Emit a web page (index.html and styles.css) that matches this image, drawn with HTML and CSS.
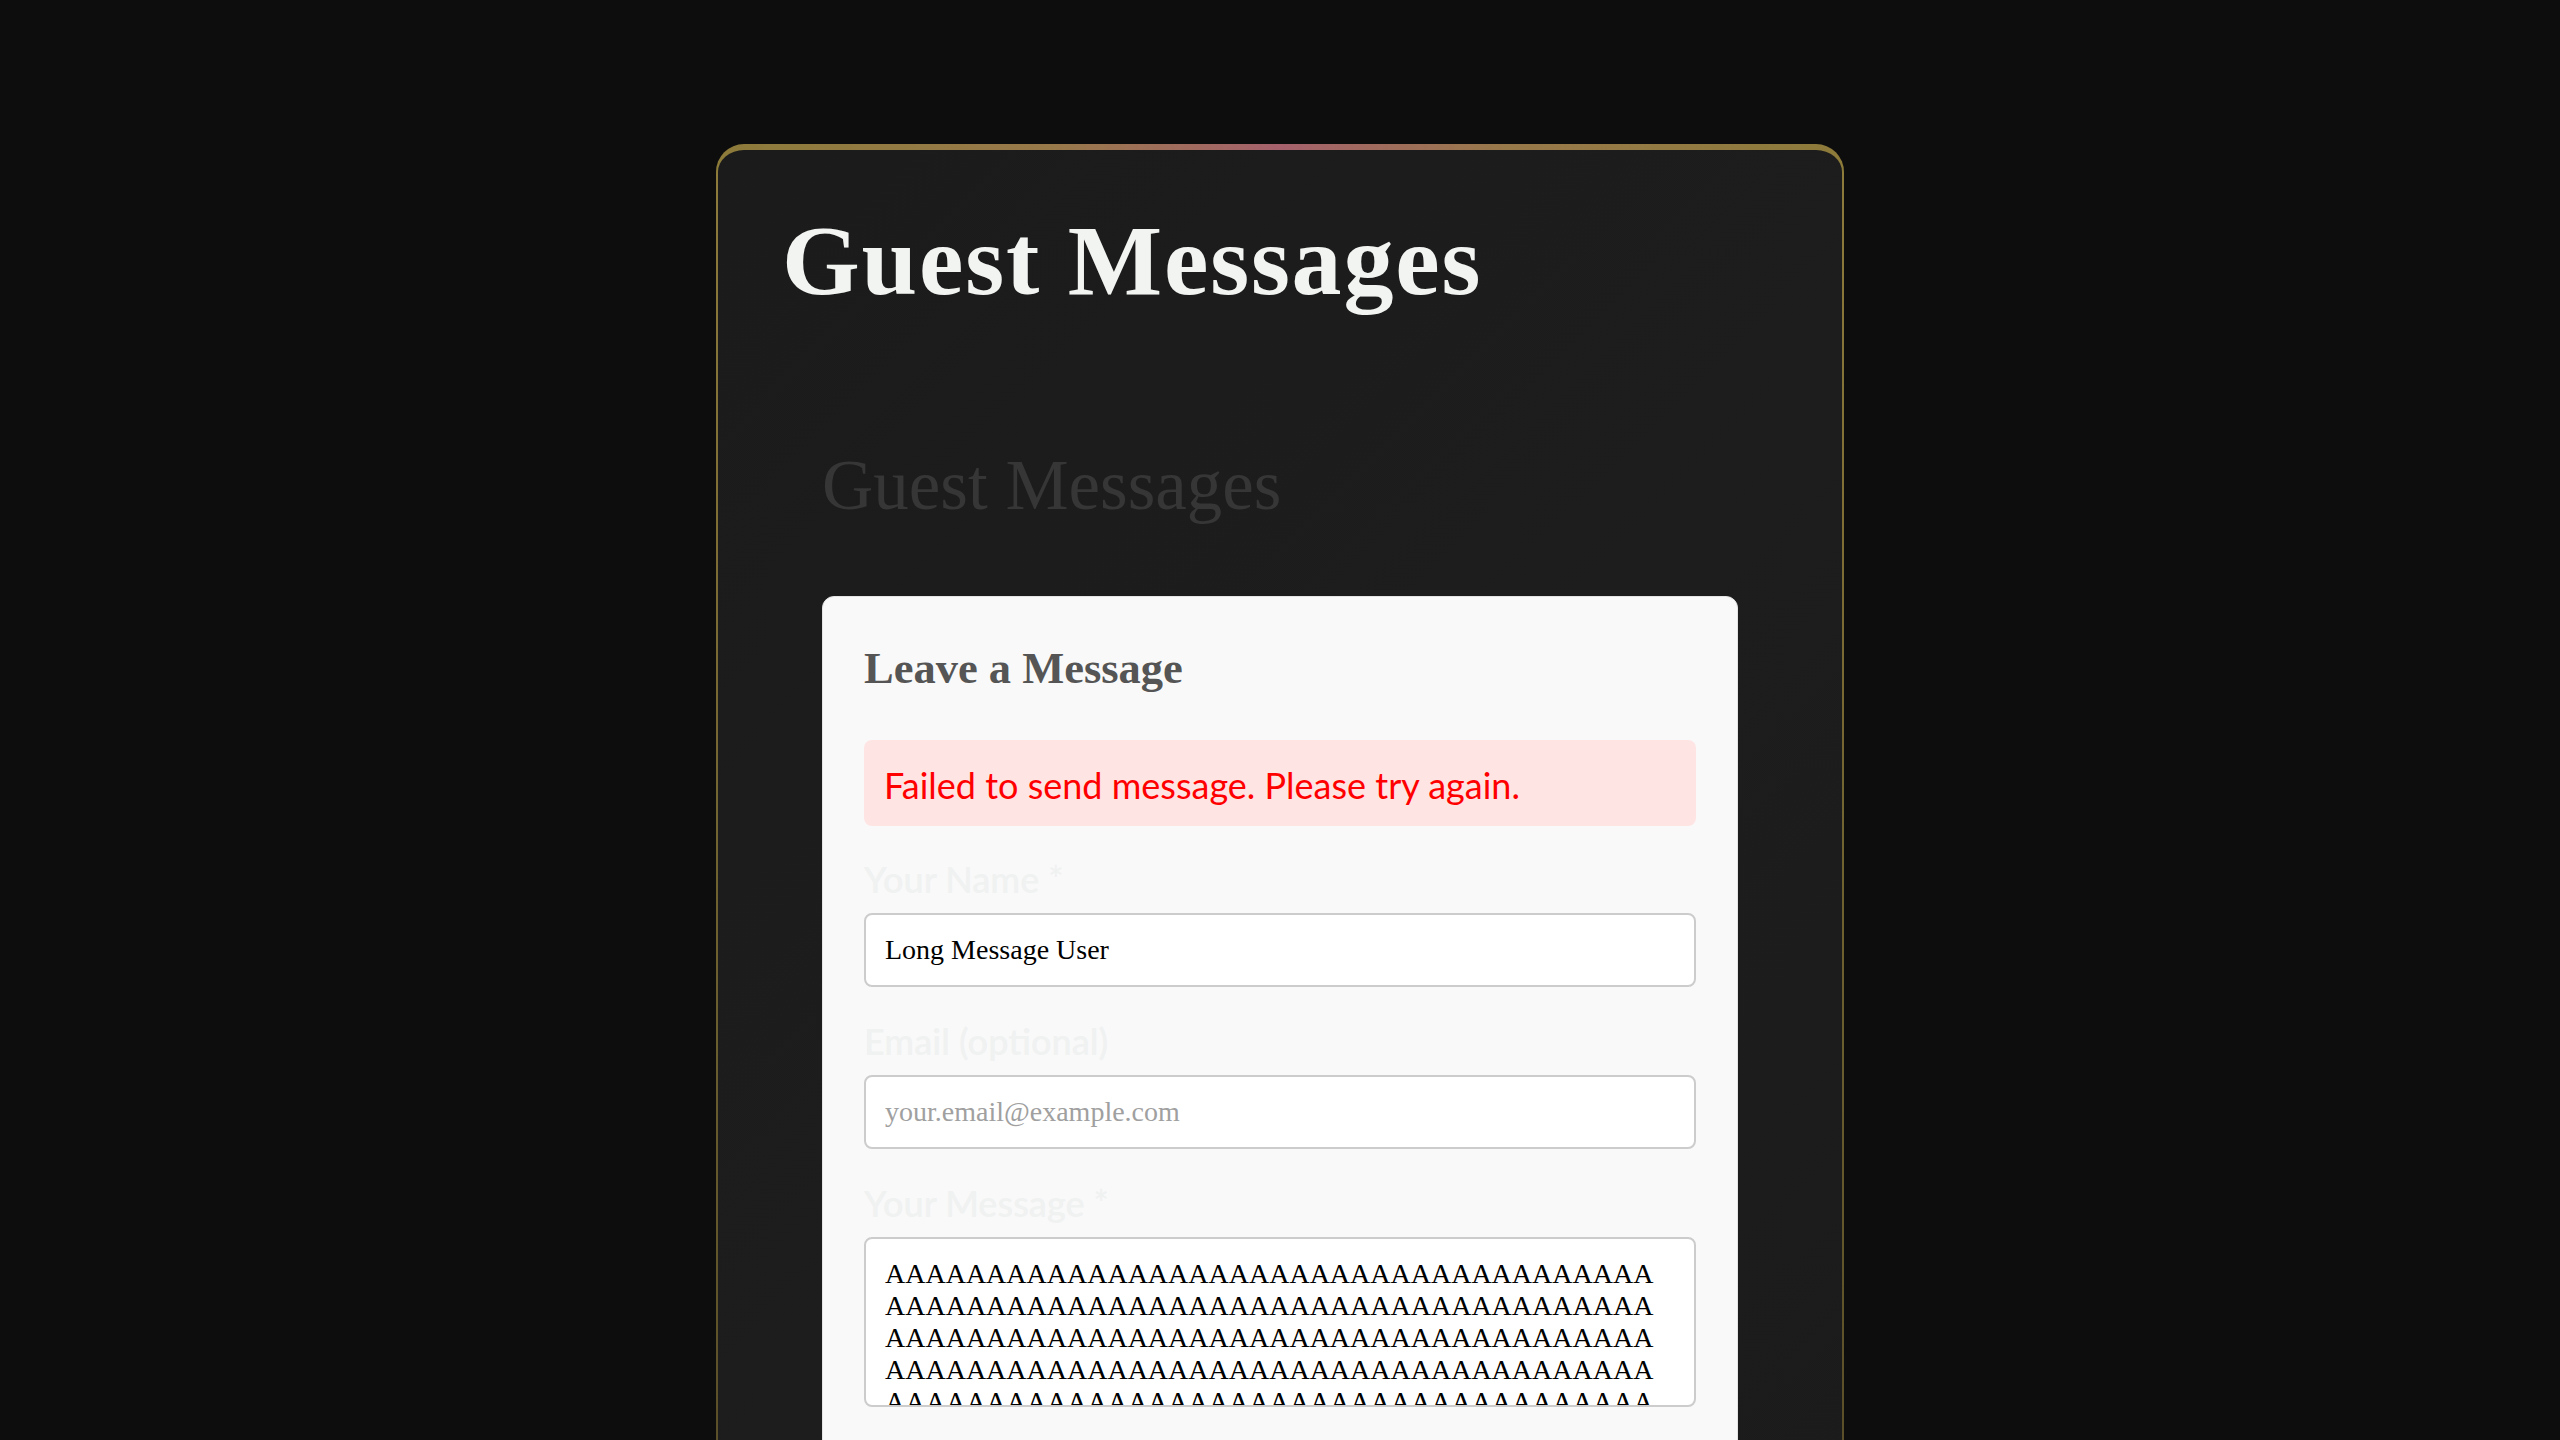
FILE: index.html
```html
<!DOCTYPE html>
<html lang="en">
<head>
<meta charset="utf-8">
<title>Guest Messages</title>
<link rel="stylesheet" href="styles.css">
</head>
<body>
<div class="page">
  <main class="card">
    <h1 class="card-title">Guest Messages</h1>
    <section class="guestbook">
      <h2 class="guestbook-title">Guest Messages</h2>
      <form class="form-card">
        <h3 class="form-title">Leave a Message</h3>
        <div class="error-box">Failed to send message. Please try again.</div>
        <div class="form-group">
          <label class="form-label" for="name">Your Name *</label>
          <input class="form-input" id="name" type="text" value="Long Message User">
        </div>
        <div class="form-group">
          <label class="form-label" for="email">Email (optional)</label>
          <input class="form-input" id="email" type="email" placeholder="your.email@example.com">
        </div>
        <div class="form-group">
          <label class="form-label" for="message">Your Message *</label>
          <textarea class="form-textarea" id="message">AAAAAAAAAAAAAAAAAAAAAAAAAAAAAAAAAAAAAAAAAAAAAAAAAAAAAAAAAAAAAAAAAAAAAAAAAAAAAAAAAAAAAAAAAAAAAAAAAAAAAAAAAAAAAAAAAAAAAAAAAAAAAAAAAAAAAAAAAAAAAAAAAAAAAAAAAAAAAAAAAAAAAAAAAAAAAAAAAAAAAAAAAAAAAAAAAAAAAAAAAAAAAAAAAAAAAAAAAAAAAAAAAAAAAAAAAAAAAAAAAAAAAAAAAAAAAAAAAAAAAAAAAAAAAAAAAAAAAAAAAAAAAAAAAAAAAAAAAAAAA</textarea>
        </div>
      </form>
    </section>
  </main>
</div>
</body>
</html>
```
FILE: styles.css
```css
* { box-sizing: border-box; }

html, body {
  margin: 0;
  padding: 0;
  background: #0d0d0d;
}

.page {
  padding-top: 144px;
  padding-bottom: 200px;
}

.card {
  width: 1128px;
  margin: 0 auto;
  border: 2px solid transparent;
  border-top-width: 6px;
  border-radius: 28px;
  padding: 51px 64px 80px;
  background:
    linear-gradient(135deg, #1a1b1a 0%, #1c1d1c 50%, #1a1b1a 100%) padding-box,
    linear-gradient(180deg, rgba(13,13,13,0) 0, rgba(13,13,13,0) 20px, rgba(13,13,13,0.4) 1300px) border-box,
    linear-gradient(90deg, #8d7b3a 0%, #98794a 30%, #a6616c 50%, #98794a 70%, #8d7b3a 100%) border-box;
}

.card-title {
  margin: 0;
  font-family: "Liberation Serif", "Times New Roman", serif;
  font-weight: 700;
  font-size: 100px;
  line-height: 120px;
  letter-spacing: 1.8px;
  color: #f2f4f2;
}

.guestbook {
  margin-top: 85px;
  padding: 40px;
}

.guestbook-title {
  margin: 0;
  font-family: "Liberation Serif", "Times New Roman", serif;
  font-weight: 400;
  font-size: 71px;
  line-height: 79px;
  color: #363636;
}

.form-card {
  margin-top: 71px;
  background: #f9f9f9;
  border: 1px solid #e4e4e4;
  border-radius: 12px;
  padding: 47px 41px 120px;
}

.form-title {
  margin: 0 0 47px;
  font-family: "Liberation Serif", "Times New Roman", serif;
  font-weight: 700;
  font-size: 44.5px;
  line-height: 49px;
  color: #555555;
}

.error-box {
  background: #ffe4e4;
  color: #ff0000;
  border-radius: 8px;
  padding: 22px 20px 18px;
  font-family: Lato, "Noto Sans", sans-serif;
  font-size: 36px;
  line-height: 46px;
  margin-bottom: 32px;
}

.form-group {
  display: flex;
  flex-direction: column;
  margin-bottom: 33px;
}

.form-label {
  font-family: Lato, "Noto Sans", sans-serif;
  font-weight: 600;
  font-size: 36px;
  line-height: 43px;
  color: #f0f1f1;
  margin-bottom: 12px;
}

.form-input,
.form-textarea {
  width: 100%;
  border: 2px solid #cccccc;
  border-radius: 8px;
  background: #ffffff;
  font-family: "Liberation Serif", "Times New Roman", serif;
  font-size: 28px;
  color: #000000;
  outline: none;
}

.form-input {
  height: 74px;
  padding: 0 19px;
}

.form-input::placeholder {
  color: #a0a0a0;
}

.form-textarea {
  height: 170px;
  padding: 19px 22px 19px 19px;
  line-height: normal;
  resize: none;
  overflow: hidden;
  display: block;
}
```
